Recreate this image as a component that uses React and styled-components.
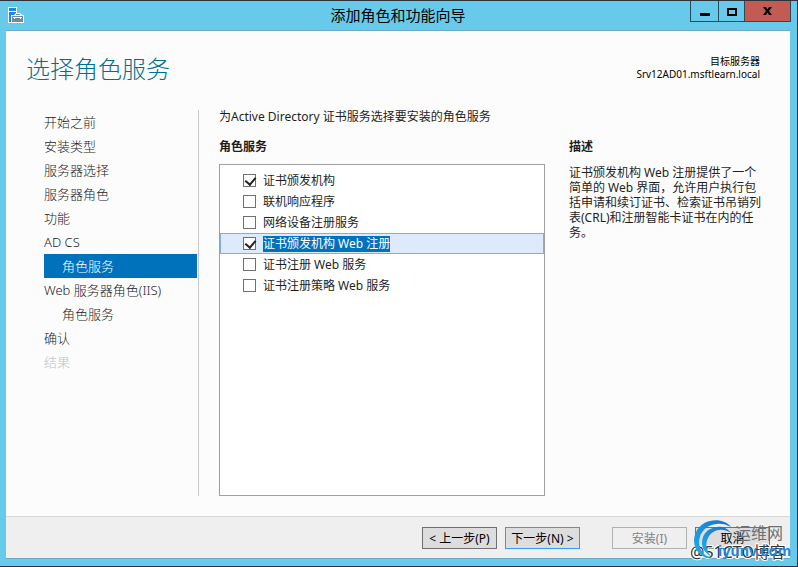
import { useState } from "react";
import styled, { createGlobalStyle } from "styled-components";

const steps = [
  { name: "开始之前" },
  { name: "安装类型" },
  { name: "服务器选择" },
  { name: "服务器角色" },
  { name: "功能" },
  { name: "AD CS" },
  { name: "角色服务", nested: true, current: true },
  { name: "Web 服务器角色(IIS)" },
  { name: "角色服务", nested: true },
  { name: "确认" },
  { name: "结果", disabled: true },
];

const services = [
  { id: "ca", name: "证书颁发机构" },
  { id: "ocsp", name: "联机响应程序" },
  { id: "ndes", name: "网络设备注册服务" },
  { id: "web-enroll", name: "证书颁发机构 Web 注册" },
  { id: "enroll", name: "证书注册 Web 服务" },
  { id: "policy", name: "证书注册策略 Web 服务" },
];

const App = () => {
  const [checked, setChecked] = useState(["ca", "web-enroll"]);
  const [selected, setSelected] = useState("web-enroll");

  const toggle = (id) => {
    setSelected(id);
    setChecked(
      checked.includes(id) ? checked.filter((c) => c !== id) : [...checked, id]
    );
  };

  return (
    <Window>
      <GlobalStyle />
      <TitleBar>
        <ServerIcon />
        <WindowTitle>添加角色和功能向导</WindowTitle>
        <WindowButtons>
          <WindowButton aria-label="最小化" $width={28}>
            <svg width="10" height="9">
              <path d="M0 6h10v3H0z" />
            </svg>
          </WindowButton>
          <WindowButton aria-label="最大化" $width={26}>
            <svg width="10" height="9">
              <path d="M0 1h10v8H0zM2 3v4h6V3z" fillRule="evenodd" />
            </svg>
          </WindowButton>
          <WindowButton aria-label="关闭" $width={46} $close>
            <svg width="9" height="8">
              <path d="M0 0h3l1.500 2.500L6 0h3L6 4l3 4H6L4.500 5.500 3 8H0l3-4z" />
            </svg>
          </WindowButton>
        </WindowButtons>
      </TitleBar>

      <Page>
        <Header>
          <Heading>选择角色服务</Heading>
          <Target>
            目标服务器
            <br />
            Srv12AD01.msftlearn.local
          </Target>
        </Header>

        <Content>
          <Nav>
            {steps.map((step, i) => (
              <Step
                key={i}
                href="#"
                $nested={step.nested}
                $current={step.current}
                $disabled={step.disabled}
              >
                {step.name}
              </Step>
            ))}
          </Nav>

          <Main>
            <Intro>为Active Directory 证书服务选择要安装的角色服务</Intro>
            <Label>角色服务</Label>
            <List>
              {services.map((service) => (
                <Row key={service.id} $selected={selected === service.id}>
                  <Checkbox
                    type="checkbox"
                    checked={checked.includes(service.id)}
                    onChange={() => toggle(service.id)}
                  />
                  <RowName $selected={selected === service.id}>
                    {service.name}
                  </RowName>
                </Row>
              ))}
            </List>
          </Main>

          <Aside>
            <Label>描述</Label>
            <Description>
              证书颁发机构 Web 注册提供了一个简单的 Web
              界面，允许用户执行包括申请和续订证书、检索证书吊销列表(CRL)和注册智能卡证书在内的任务。
            </Description>
          </Aside>
        </Content>

        <Footer>
          <ButtonGroup>
            <Button>&lt; 上一步(P)</Button>
            <Button $primary>下一步(N) &gt;</Button>
          </ButtonGroup>
          <ButtonGroup>
            <Button disabled>安装(I)</Button>
            <Button>取消</Button>
          </ButtonGroup>
        </Footer>
      </Page>
      <Watermark />
    </Window>
  );
};

const ServerIcon = () => (
  <svg width="16" height="16" viewBox="0 0 16 16">
    <path d="M0 0h9v16H0z" fill="#fff" />
    <path d="M1 1h7v3H1zM1 5h7v10H1z" fill="#1e88d8" />
    <path d="M3 8h3l2-2h4l2 2h2v8H3z" fill="#fff" />
    <path d="M4 9h11v6H4zM8 7h4v1H8z" fill="#6e8ba3" />
    <path d="M5 10h9v1H5zM6 11h1v1H6zM12 11h1v1h-1z" fill="#fff" />
  </svg>
);

const Watermark = () => (
  <WatermarkSvg width="110" height="46" viewBox="0 0 110 46" aria-hidden="true">
    <defs>
      <linearGradient id="ring" x1="0" y1="1" x2="1" y2="0">
        <stop offset="0" stopColor="#1eb0f2" />
        <stop offset="1" stopColor="#1c6fc0" />
      </linearGradient>
    </defs>
    <text
      x="3"
      y="39"
      fontSize="16"
      fill="#333"
      stroke="#fff"
      strokeWidth="2"
      paintOrder="stroke"
    >
      @51CTO博客
    </text>
    <path
      d="M44 8C36-2 16-1 9 13c-6 13 2 27 18 27C14 37 9 26 14 15 20 4 34 2 44 8z"
      fill="url(#ring)"
    />
    <path
      d="M44 14C36 3 20 8 16 18c-3 9 1 16 8 19-5-5-6-12-3-18 4-8 14-11 23-5z"
      fill="url(#ring)"
    />
    <text x="48" y="20" fontSize="16" fill="#6b7078">
      运维网
    </text>
    <LogoText x="31" y="37">
      iyunv.com
    </LogoText>
  </WatermarkSvg>
);

const GlobalStyle = createGlobalStyle`
  * {
    box-sizing: border-box;
  }

  body {
    margin: 0;
    color: #1e1e1e;
    font-family: "Noto Sans", "Noto Sans CJK SC", sans-serif;
    font-size: 12px;
  }

  button,
  input {
    font: inherit;
    margin: 0;
  }
`;

const Window = styled.div`
  position: relative;
  display: flex;
  flex-direction: column;
  min-height: 100vh;
  padding: 0 7px 7px 6px;
  background: #67caea;
  border: solid #2b333b;
  border-width: 1px 1px 1px 0;
`;

const TitleBar = styled.header`
  display: grid;
  grid-template-columns: 100px 1fr 101px;
  height: 29px;
  margin-right: -1px;

  > svg {
    margin: 6px 2px;
  }
`;

const WindowTitle = styled.div`
  color: #000;
  font-size: 15px;
  line-height: 29px;
  text-align: center;
`;

const WindowButtons = styled.div`
  display: flex;
  height: 21px;
  border: solid #2b4a5a;
  border-width: 0 1px 1px;
`;

const WindowButton = styled.button`
  display: flex;
  align-items: center;
  justify-content: center;
  flex: ${(props) => props.$width} 1 0;
  padding: 0;
  border: 0;
  border-left: ${(props) => (props.$width === 28 ? 0 : "1px solid #2b4a5a")};
  background: ${(props) => (props.$close ? "#c35b53" : "transparent")};
`;

const Page = styled.main`
  display: flex;
  flex: 1;
  flex-direction: column;
  background: #fcfcfc;
  border: solid #6fa9c4;
  border-width: 1px 0;
`;

const Header = styled.div`
  display: flex;
  justify-content: space-between;
  height: 79px;
  padding: 20px 30px 0 20px;
`;

const Heading = styled.h1`
  margin: 0;
  color: #00708f;
  font-size: 24px;
  font-weight: 300;
  line-height: 36px;
`;

const Target = styled.div`
  padding-top: 4px;
  color: #000;
  font-size: 10px;
  line-height: 13px;
  text-align: right;
`;

const Content = styled.div`
  display: flex;
  flex: 1;
  padding: 0 28px 20px 38px;
`;

const Nav = styled.nav`
  display: flex;
  flex-direction: column;
  width: 155px;
  padding-right: 1px;
  border-right: 1px solid #c8c8c8;
`;

const Step = styled.a`
  height: 24px;
  padding-left: ${(props) => (props.$nested ? 18 : 0)}px;
  color: ${(props) =>
    props.$current ? "#fff" : props.$disabled ? "#c4c4c4" : "#222"};
  background: ${(props) => (props.$current ? "#0072bc" : "transparent")};
  font-size: 13px;
  font-weight: 300;
  line-height: 24px;
  text-decoration: none;
`;

const Main = styled.section`
  display: flex;
  flex: 1;
  flex-direction: column;
  margin: 0 24px 0 20px;
`;

const Intro = styled.p`
  height: 29px;
  margin: 0;
  line-height: 14px;
`;

const Label = styled.h2`
  margin: 0;
  font-size: 12px;
  line-height: 16px;
`;

const List = styled.div`
  flex: 1;
  margin-top: 9px;
  padding: 5px 0;
  background: #fff;
  border: 1px solid #a0a0a0;
`;

const Row = styled.label`
  display: flex;
  align-items: center;
  gap: 7px;
  height: 21px;
  padding-left: 22px;
  border: 1px solid ${(props) => (props.$selected ? "#84acdd" : "transparent")};
  background: ${(props) => (props.$selected ? "#dceafc" : "transparent")};
`;

const Checkbox = styled.input`
  appearance: none;
  width: 13px;
  height: 13px;
  background: #fff;
  border: 1px solid #707070;

  &:checked::before {
    content: "";
    display: block;
    width: 5px;
    height: 8px;
    margin: 0 0 0 3px;
    border: solid #212121;
    border-width: 0 2px 2px 0;
    transform: rotate(40deg);
  }
`;

const RowName = styled.span`
  color: ${(props) => (props.$selected ? "#fff" : "#1e1e1e")};
  background: ${(props) => (props.$selected ? "#0072bc" : "transparent")};
  line-height: 16px;
`;

const Aside = styled.aside`
  width: 193px;
  padding-top: 29px;
`;

const Description = styled.p`
  margin: 10px 0 0;
  line-height: 15px;
`;

const Footer = styled.footer`
  display: flex;
  justify-content: flex-end;
  gap: 32px;
  padding: 10px 20px 9px;
  background: #efefef;
  border-top: 1px solid #d9d9d9;
`;

const ButtonGroup = styled.div`
  display: flex;
  gap: 8px;
`;

const Button = styled.button`
  width: 75px;
  height: 22px;
  padding: 2px 0 0;
  color: #000;
  background: #dddddd;
  border: 1px solid ${(props) => (props.$primary ? "#3399ff" : "#707070")};
  line-height: 18px;
  white-space: nowrap;

  &:disabled {
    color: #838383;
    background: #efefef;
    border-color: #adb2b5;
  }
`;

const WatermarkSvg = styled.svg`
  position: absolute;
  right: 0;
  bottom: 1px;
  pointer-events: none;
`;

const LogoText = styled.text`
  fill: #1e88d8;
  font-family: "Liberation Sans", sans-serif;
  font-size: 15px;
  font-weight: 700;
`;

export default App;
